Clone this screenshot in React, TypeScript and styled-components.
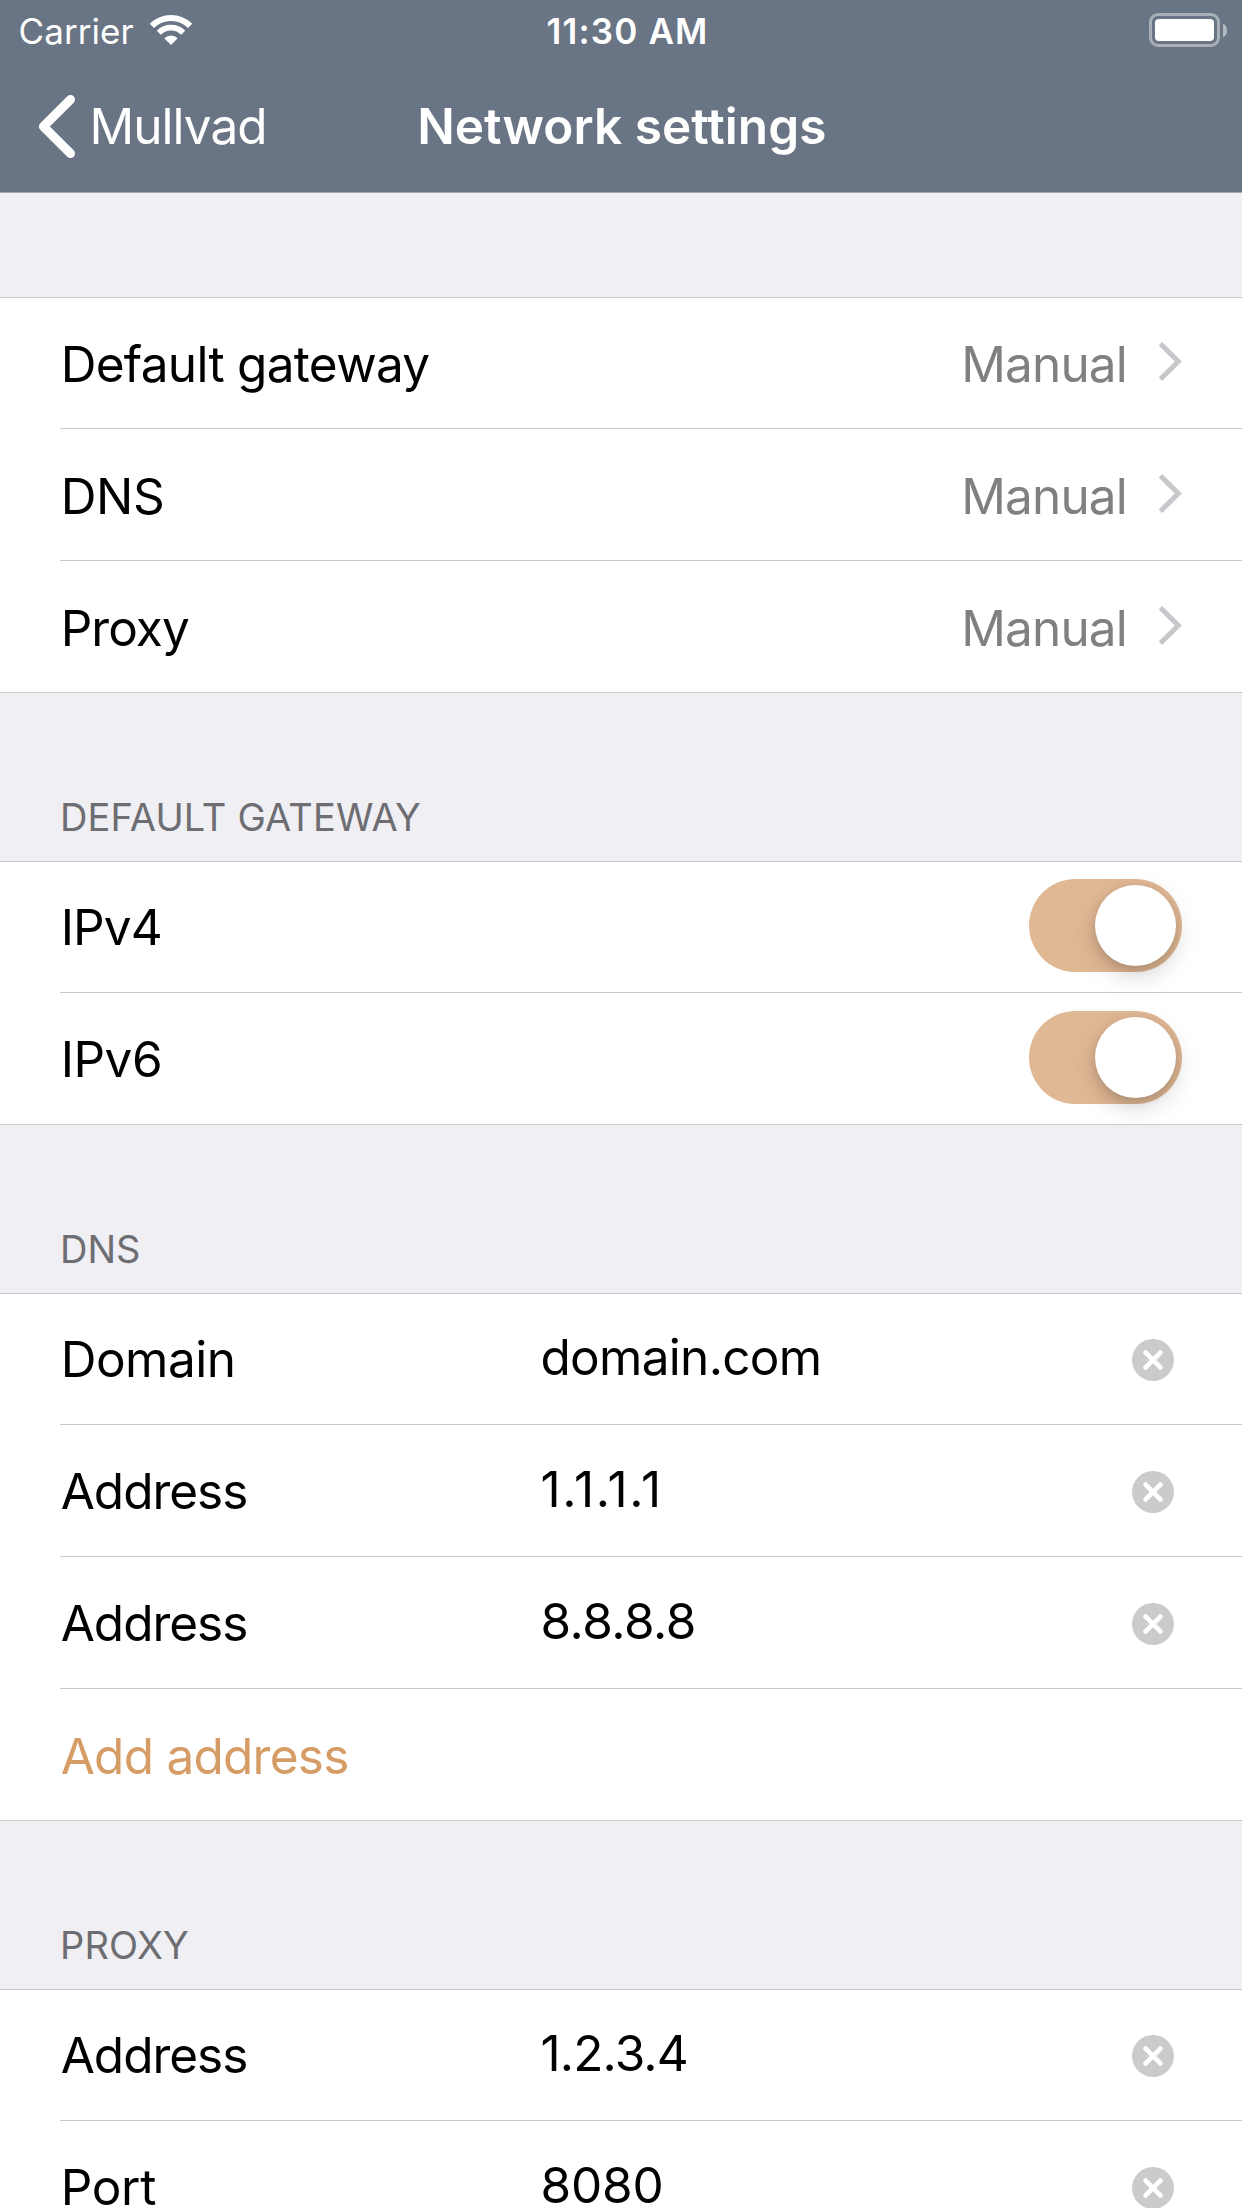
import React, { useState } from "react";
import styled, { createGlobalStyle } from "styled-components";

const colors = {
  header: "#697584",
  headerLine: "#aea6ab",
  background: "#efeff4",
  separator: "#c8c7cc",
  caption: "#6d6d72",
  detail: "#808080",
  disclosure: "#c7c7cc",
  accent: "#d69c66",
  track: "#e1b894",
  clear: "#cbcbcb",
};

const GlobalStyle = createGlobalStyle`
  *, *::before, *::after { box-sizing: border-box; }
  body {
    margin: 0;
    background: ${colors.background};
    font-family: "Inter", "Liberation Sans", sans-serif;
  }
  button, input { font: inherit; border: 0; padding: 0; background: none; outline: 0; }
`;

const Screen = styled.div`
  width: 1242px;
  height: 2208px;
  overflow: hidden;
  background: ${colors.background};
`;

const Header = styled.header`
  height: 193px;
  background: ${colors.header};
  border-bottom: 1px solid ${colors.headerLine};
  color: #fff;
`;

const StatusBar = styled.div`
  display: flex;
  align-items: flex-start;
  height: 60px;
  padding: 10px 15px 0 18px;
  font-size: 35px;
  line-height: 42px;
  white-space: nowrap;
`;

const StatusSide = styled.div<{ $end?: boolean }>`
  display: flex;
  flex: 1;
  justify-content: ${(p) => (p.$end ? "flex-end" : "flex-start")};
`;

const Carrier = styled.span`
  letter-spacing: 0.08px;
  margin-right: 16.2px;
  padding-left: 0.5px;
`;

const WifiIcon = styled.svg`
  width: 42px;
  height: 31px;
  margin-top: 4px;
`;

const Clock = styled.span`
  font-weight: 600;
  letter-spacing: 1.17px;
  padding-left: 10px;
`;

const Battery = styled.div`
  display: flex;
  align-items: center;
  gap: 3px;
  height: 34px;
  margin-top: 3px;
`;

const BatteryBody = styled.div`
  width: 71px;
  height: 34px;
  padding: 3px;
  border: 3px solid rgba(255, 255, 255, 0.42);
  border-radius: 9px;
`;

const BatteryLevel = styled.div`
  height: 100%;
  border-radius: 4px;
  background: #fff;
`;

const BatteryCap = styled.div`
  width: 4px;
  height: 13px;
  border-radius: 0 4px 4px 0 / 0 6.5px 6.5px 0;
  background: rgba(255, 255, 255, 0.5);
`;

const NavBar = styled.nav`
  display: grid;
  grid-template-columns: 1fr auto 1fr;
  height: 132px;
  font-size: 49.5px;
  line-height: 60px;
  white-space: nowrap;
`;

const BackButton = styled.button`
  display: flex;
  align-items: flex-start;
  justify-self: start;
  padding-left: 37px;
  color: #fff;
  letter-spacing: -0.95px;
`;

const BackIcon = styled.svg`
  width: 40px;
  height: 66px;
  margin: 33px 12.4px 0 0;
`;

const BackLabel = styled.span`
  margin-top: 36px;
`;

const Title = styled.h1`
  margin: 36px 0 0;
  padding-left: 1.6px;
  font-size: inherit;
  font-weight: 600;
  letter-spacing: 0.05px;
`;

const Caption = styled.h2<{ $spacing?: number; $short?: boolean }>`
  height: ${(p) => (p.$short ? 104 : 168)}px;
  margin: 0;
  padding: 101px 60px 0;
  color: ${colors.caption};
  font-size: 38px;
  font-weight: 400;
  line-height: 46px;
  letter-spacing: ${(p) => p.$spacing ?? 0}px;
`;

const Group = styled.section`
  border-top: 1px solid ${colors.separator};
  background: #fff;
`;

const Row = styled.div`
  display: flex;
  align-items: flex-start;
  height: 132px;
  margin-left: 60px;
  padding-right: 60px;
  border-bottom: 1px solid ${colors.separator};
  color: #000;
  font-size: 49.5px;
  line-height: 60px;
  white-space: nowrap;

  &:first-child {
    margin-top: -1px;
  }

  &:last-child {
    margin-left: 0;
    padding-left: 60px;
  }
`;

const Label = styled.span<{ $spacing: number; $drop?: number; $accent?: boolean }>`
  flex: 1;
  margin-top: ${(p) => p.$drop ?? 36}px;
  padding-left: 0.7px;
  letter-spacing: ${(p) => p.$spacing}px;
  color: ${(p) => (p.$accent ? colors.accent : "inherit")};
`;

const FieldLabel = styled(Label)`
  flex: 0 0 480.4px;
`;

const Detail = styled.span`
  margin: 37px 31.2px 0 0;
  color: ${colors.detail};
  letter-spacing: -0.88px;
`;

const Disclosure = styled.svg`
  width: 24px;
  height: 42px;
  margin-top: 43px;
`;

const Field = styled.input<{ $spacing: number }>`
  flex: 1;
  min-width: 0;
  height: 60px;
  margin-top: 34px;
  color: #000;
  line-height: 60px;
  letter-spacing: ${(p) => p.$spacing}px;
`;

const ClearButton = styled.button`
  width: 42px;
  height: 42px;
  margin: 46px 8px 0 0;
  line-height: 0;
`;

const Track = styled.button<{ $on: boolean }>`
  display: flex;
  justify-content: ${(p) => (p.$on ? "flex-end" : "flex-start")};
  width: 153px;
  height: 93px;
  margin-top: 18px;
  padding: 6px;
  border-radius: 46.5px;
  background: ${(p) => (p.$on ? colors.track : "#e5e5ea")};
`;

const Thumb = styled.span`
  width: 81px;
  height: 81px;
  border-radius: 50%;
  background: #fff;
  box-shadow: 0 9px 24px rgba(0, 0, 0, 0.17), 0 3px 9px rgba(0, 0, 0, 0.12);
`;

function LinkRow({ label, spacing }: { label: string; spacing: number }) {
  return (
    <Row>
      <Label $spacing={spacing} $drop={37}>{label}</Label>
      <Detail>Manual</Detail>
      <Disclosure viewBox="0 0 24 42" fill="none" stroke={colors.disclosure} strokeWidth="5.1">
        <path d="M2.4 3.7 20.3 21.5 2.4 39.3" />
      </Disclosure>
    </Row>
  );
}

function SwitchRow({ label, spacing }: { label: string; spacing: number }) {
  const [on, setOn] = useState(true);
  return (
    <Row>
      <Label $spacing={spacing}>{label}</Label>
      <Track $on={on} role="switch" aria-checked={on} onClick={() => setOn(!on)}>
        <Thumb />
      </Track>
    </Row>
  );
}

interface FieldRowProps {
  label: string;
  labelSpacing: number;
  initial: string;
  spacing: number;
}

function FieldRow({ label, labelSpacing, initial, spacing }: FieldRowProps) {
  const [value, setValue] = useState(initial);
  return (
    <Row>
      <FieldLabel $spacing={labelSpacing}>{label}</FieldLabel>
      <Field $spacing={spacing} value={value} onChange={(e) => setValue(e.target.value)} />
      <ClearButton onClick={() => setValue("")}>
        <svg width="42" height="42" viewBox="0 0 42 42">
          <circle cx="21" cy="21" r="21" fill={colors.clear} />
          <path d="M13.6 13.6 28.4 28.4M28.4 13.6 13.6 28.4" stroke="#fff" strokeWidth="4.8" strokeLinecap="round" />
        </svg>
      </ClearButton>
    </Row>
  );
}

export default function App() {
  return (
    <Screen>
      <GlobalStyle />
      <Header>
        <StatusBar>
          <StatusSide>
            <Carrier>Carrier</Carrier>
            <WifiIcon viewBox="0 0 42 31" fill="none" stroke="#fff">
              <path d="M1.9 11.9A27 27 0 0 1 40.1 11.9" strokeWidth="6" />
              <path d="M8.8 18.8A17.2 17.2 0 0 1 33.2 18.8" strokeWidth="5.8" />
              <path d="M21 31 14.3 24.3A9.5 9.5 0 0 1 27.7 24.3Z" fill="#fff" stroke="none" />
            </WifiIcon>
          </StatusSide>
          <Clock>11:30 AM</Clock>
          <StatusSide $end>
            <Battery>
              <BatteryBody>
                <BatteryLevel />
              </BatteryBody>
              <BatteryCap />
            </Battery>
          </StatusSide>
        </StatusBar>
        <NavBar>
          <BackButton>
            <BackIcon viewBox="0 0 40 66" fill="none" stroke="#fff" strokeWidth="9" strokeLinecap="round" strokeLinejoin="round">
              <path d="M33.5 6.5 6.4 33.5 33.5 60.5" />
            </BackIcon>
            <BackLabel>Mullvad</BackLabel>
          </BackButton>
          <Title>Network settings</Title>
        </NavBar>
      </Header>

      <Caption $short />
      <Group>
        <LinkRow label="Default gateway" spacing={-0.7} />
        <LinkRow label="DNS" spacing={-0.3} />
        <LinkRow label="Proxy" spacing={-0.95} />
      </Group>

      <Caption $spacing={0.17}>DEFAULT GATEWAY</Caption>
      <Group>
        <SwitchRow label="IPv4" spacing={-0.9} />
        <SwitchRow label="IPv6" spacing={-0.5} />
      </Group>

      <Caption>DNS</Caption>
      <Group>
        <FieldRow label="Domain" labelSpacing={-0.5} initial="domain.com" spacing={-0.68} />
        <FieldRow label="Address" labelSpacing={-1.01} initial="1.1.1.1" spacing={1.71} />
        <FieldRow label="Address" labelSpacing={-1.01} initial="8.8.8.8" spacing={-0.45} />
        <Row>
          <Label $spacing={-0.74} $drop={37} $accent>Add address</Label>
        </Row>
      </Group>

      <Caption $spacing={0.15}>PROXY</Caption>
      <Group>
        <FieldRow label="Address" labelSpacing={-1.01} initial="1.2.3.4" spacing={-0.8} />
        <FieldRow label="Port" labelSpacing={-0.31} initial="8080" spacing={-0.1} />
      </Group>
    </Screen>
  );
}
